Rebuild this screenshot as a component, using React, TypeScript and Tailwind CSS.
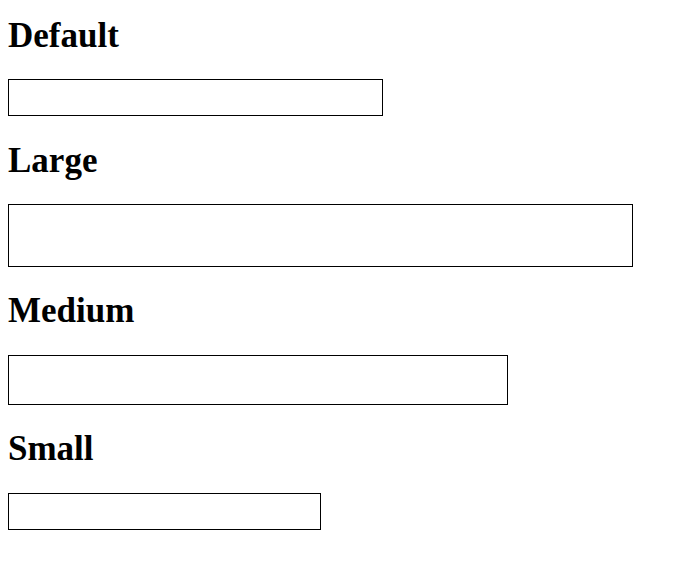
import React from "react";

export default function App() {
  const h = "block text-[35px] leading-[40px] font-bold text-black font-['Liberation_Serif','Times_New_Roman',serif]";
  const box = "block border border-black bg-white outline-none";
  return (
    <div className="min-h-[586px] w-[688px] bg-white pl-2 pt-[13px]">
      <h2 className={`${h} pt-[3px]`}>Default</h2>
      <input className={`${box} mt-[23px] h-[37px] w-[375px]`} />
      <h2 className={`${h} mt-[22px] pt-[3px]`}>Large</h2>
      <input className={`${box} mt-[23px] h-[63px] w-[625px]`} />
      <h2 className={`${h} mt-[24px]`}>Medium</h2>
      <input className={`${box} mt-[24px] h-[50px] w-[500px]`} />
      <h2 className={`${h} mt-[21px] pt-[3px]`}>Small</h2>
      <input className={`${box} mt-[24px] h-[37px] w-[313px]`} />
    </div>
  );
}
